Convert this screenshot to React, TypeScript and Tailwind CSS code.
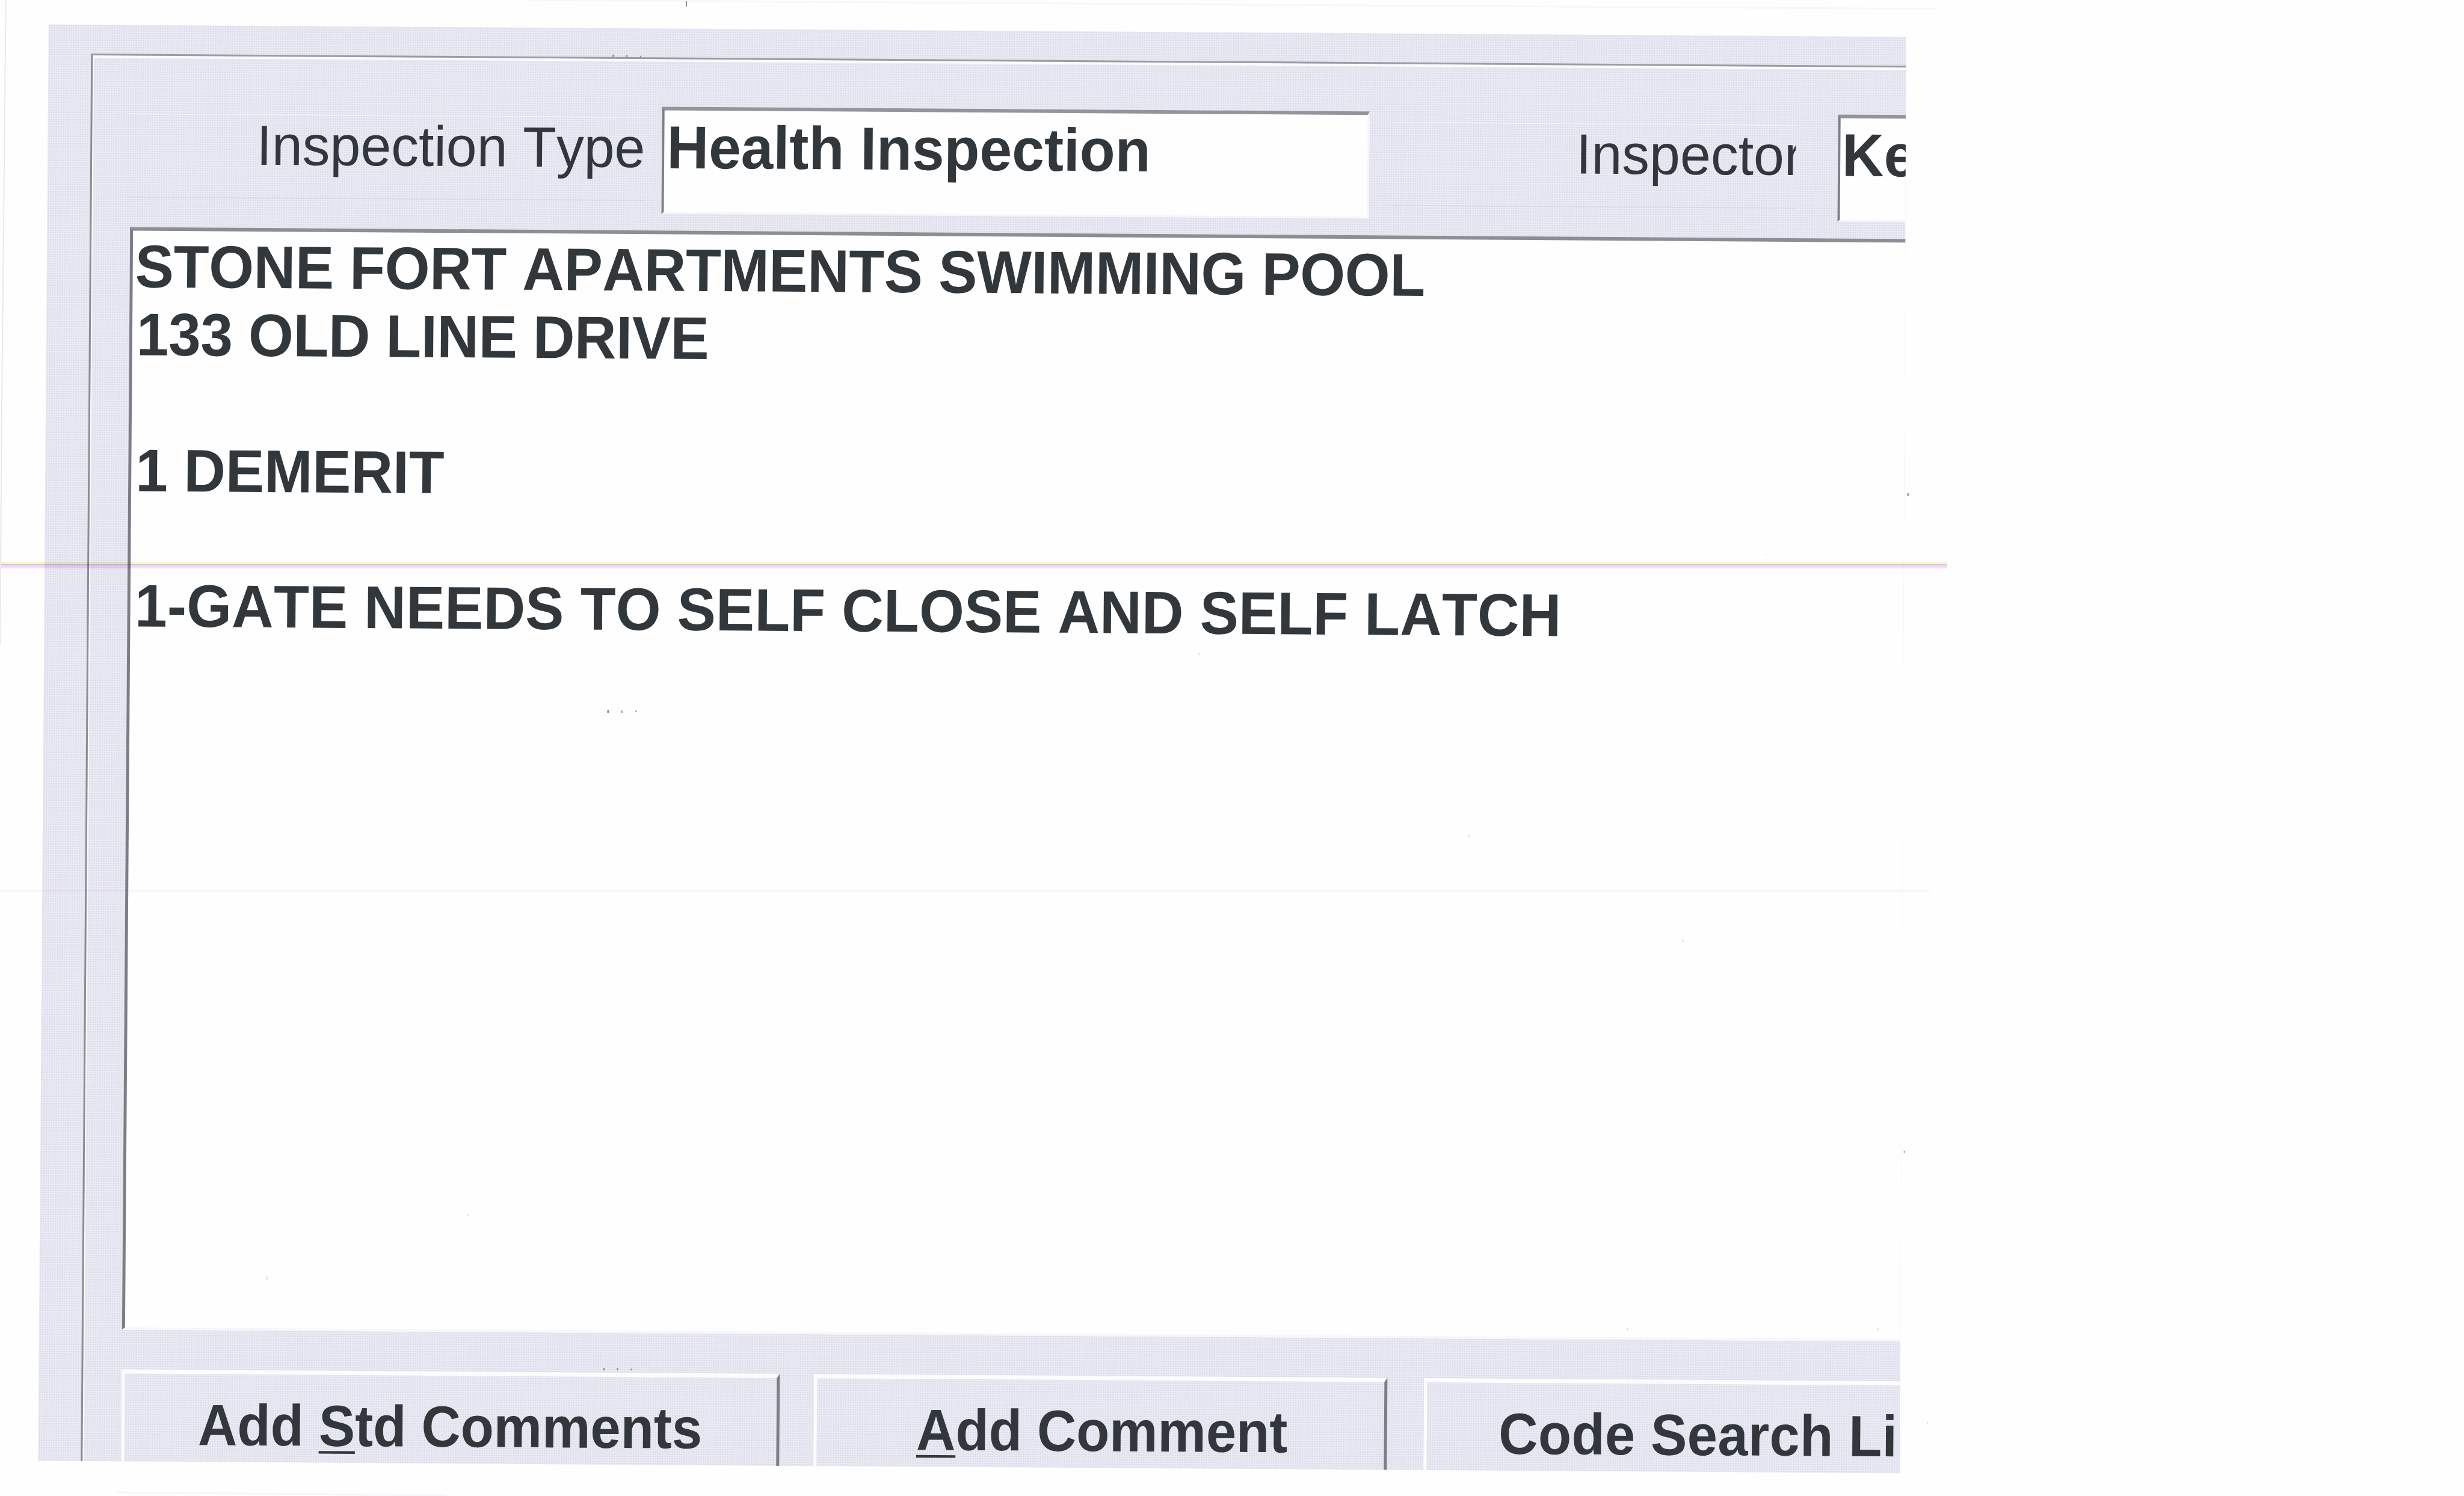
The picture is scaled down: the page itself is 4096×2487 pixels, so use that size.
const comments = [
  { text: "STONE FORT APARTMENTS SWIMMING POOL", className: "pl-0 tracking-[-0.27px]" },
  { text: "133 OLD LINE DRIVE", className: "pl-[3px] tracking-[-0.3px]" },
  { text: "", className: "" },
  { text: "1 DEMERIT", className: "pl-[3px]" },
  { text: "", className: "" },
  { text: "1-GATE NEEDS TO SELF CLOSE AND SELF LATCH", className: "pl-[3.5px] tracking-[0.22px]" },
];

// [x, y, width, height]
const specks = [
  [1169, 2, 2, 9],
  [1044, 93, 3, 4],
  [1067, 94, 3, 3],
  [1091, 95, 2, 3],
  [1035, 1210, 3, 5],
  [1059, 1211, 2, 4],
  [1083, 1211, 2, 3],
  [1028, 2332, 3, 4],
  [1051, 2332, 3, 4],
  [1075, 2333, 2, 3],
  [3251, 841, 3, 4],
  [3245, 1962, 2, 3],
];

const faintSpecks = [
  [796, 2070, 3, 3],
  [454, 2175, 2, 7],
  [2043, 1113, 2, 4],
  [2502, 1423, 3, 3],
  [2867, 1602, 3, 3],
  [2773, 2264, 2, 4],
  [3009, 945, 2, 2],
  [3200, 2264, 2, 4],
  [3284, 2424, 2, 4],
];

const FieldLabel = ({ text, className }: { text: string; className: string }) => (
  <div
    className={`mt-24 h-[140px] shrink-0 overflow-hidden border-y-2 border-dotted border-t-[#f6f6fb] border-b-[#d2d3dd] ${className}`}
  >
    <p className="origin-[0_81.7%] scale-y-[1.03] text-[91.5px] leading-[100px] whitespace-nowrap">
      {text}
    </p>
  </div>
);

const TextField = ({ value, className }: { value: string; className: string }) => (
  <div
    className={`mt-[79px] h-[178px] shrink-0 border-t-[6px] border-r-[3px] border-b-[3px] border-l-[4px] border-t-[#92969c] border-r-[#f5f5fa] border-b-[#f5f5fa] border-l-[#7d8187] bg-[#fefefe] pt-[13px] ${className}`}
  >
    <p className="origin-[0_83.4%] scale-y-[1.04] text-[96.5px] leading-[100px] font-bold whitespace-nowrap">
      {value}
    </p>
  </div>
);

const CommandButton = ({
  before = "",
  hotkey = "",
  after,
  className,
}: {
  before?: string;
  hotkey?: string;
  after: string;
  className: string;
}) => (
  <button
    className={`block h-[170px] shrink-0 border-t-[7px] border-r-[5px] border-l-[5px] border-t-[#fcfcff] border-r-[#7c8086] border-l-[#fcfcff] pt-[37px] text-left ${className}`}
  >
    <span className="block h-[133px] origin-[0_61.2%] scale-y-[1.07] text-[90.3px] leading-[100px] font-bold whitespace-pre">
      {before}
      {hotkey && (
        <span className="underline decoration-[4px] underline-offset-[8px] [text-decoration-skip-ink:none]">
          {hotkey}
        </span>
      )}
      {after}
    </span>
  </button>
);

const InspectionForm = () => (
  <div className="flex h-[2428px] w-[3300px] origin-top-left flex-col pt-[39.5px] pl-[81px] [transform:matrix(1,0.0067,-0.0073,1,0,0)]">
    <div className="flex-1 overflow-hidden bg-[#e9eaf4] bg-[radial-gradient(circle,#d5d7e4_0.6px,transparent_1.5px)] bg-[length:4px_4px] pt-[48.5px] pl-[70.6px]">
      <div className="h-full border-t-[3px] border-l-[3px] border-t-[#9a9da3] border-l-[#8a8e94] shadow-[inset_2px_4px_0_#fbfbfe]">
        {/* Header fields */}
        <div className="flex h-[285px] items-start pl-[59.6px]">
          <FieldLabel text="Inspection Type" className="w-[859px] pl-[214px]" />
          <TextField value="Health Inspection" className="ml-[29px] w-[1176px] pl-[4px]" />
          <FieldLabel text="Inspector" className="ml-[38px] w-[670.5px] pl-[305.6px]" />
          <TextField value="Ke" className="ml-[70px] w-[400px] pl-[3px]" />
        </div>

        {/* Comments */}
        <div className="ml-[64px] h-[1833px] border-t-[6px] border-b-[4px] border-l-[5px] border-t-[#8b8f95] border-b-[#f7f7fb] border-l-[#7b7f85] bg-[#fefefe] pt-[5px] pl-[4.5px]">
          {comments.map((line, i) => (
            <p
              key={i}
              className={`h-[112.9px] origin-[0_79.5%] scale-y-[1.04] text-[96.2px] leading-[112.9px] font-bold whitespace-pre ${line.className}`}
            >
              {line.text}
            </p>
          ))}
        </div>

        {/* Commands */}
        <div className="ml-[64px] flex pt-[66px]">
          <CommandButton before="Add " hotkey="S" after="td Comments" className="w-[1094px] pl-[123px]" />
          <CommandButton hotkey="A" after="dd Comment" className="ml-[57px] w-[953px] pl-[166px]" />
          <CommandButton after="Code Search Li" className="ml-[61px] w-[1000px] pl-[120px] tracking-[0.4px]" />
        </div>
      </div>
    </div>
  </div>
);

export default function App() {
  return (
    <div className="relative h-[2487px] w-[4096px] overflow-hidden bg-[#fefefe] font-['Liberation_Sans',Arial,sans-serif] text-[#32373b] [font-kerning:none]">
      <div className="h-full [clip-path:polygon(0_0,3169px_0,3158px_100%,0_100%)]">
        <InspectionForm />
      </div>

      {/* Scanner streaks */}
      <div className="absolute top-[934px] left-0 w-[3237px] mix-blend-multiply">
        <div className="h-[4px] bg-[#f6f8cc]" />
        <div className="h-[2px] bg-[#d3c8d6]" />
        <div className="h-[5px] bg-[#f8def9]" />
      </div>
      <div className="absolute top-[1480px] left-0 h-[2px] w-[3208px] bg-[#fdf0fd] mix-blend-multiply" />

      {/* Dust */}
      <svg className="absolute inset-0 h-full w-full" viewBox="0 0 4200 2550">
        <path d="M10 0L3 700L0 1100" fill="none" stroke="#e3eaf2" strokeWidth="2" />
        <path d="M900 0L2300 9L3300 15" fill="none" stroke="#f7f7fa" strokeWidth="3" />
        <path d="M200 2544L760 2549" fill="none" stroke="#f5f6f9" strokeWidth="3" />
        {specks.map(([x, y, w, h]) => (
          <rect key={`${x}-${y}`} x={x} y={y} width={w} height={h} fill="#8d9094" />
        ))}
        {faintSpecks.map(([x, y, w, h]) => (
          <rect key={`${x}-${y}`} x={x} y={y} width={w} height={h} fill="#e0e1e4" />
        ))}
      </svg>
    </div>
  );
}
